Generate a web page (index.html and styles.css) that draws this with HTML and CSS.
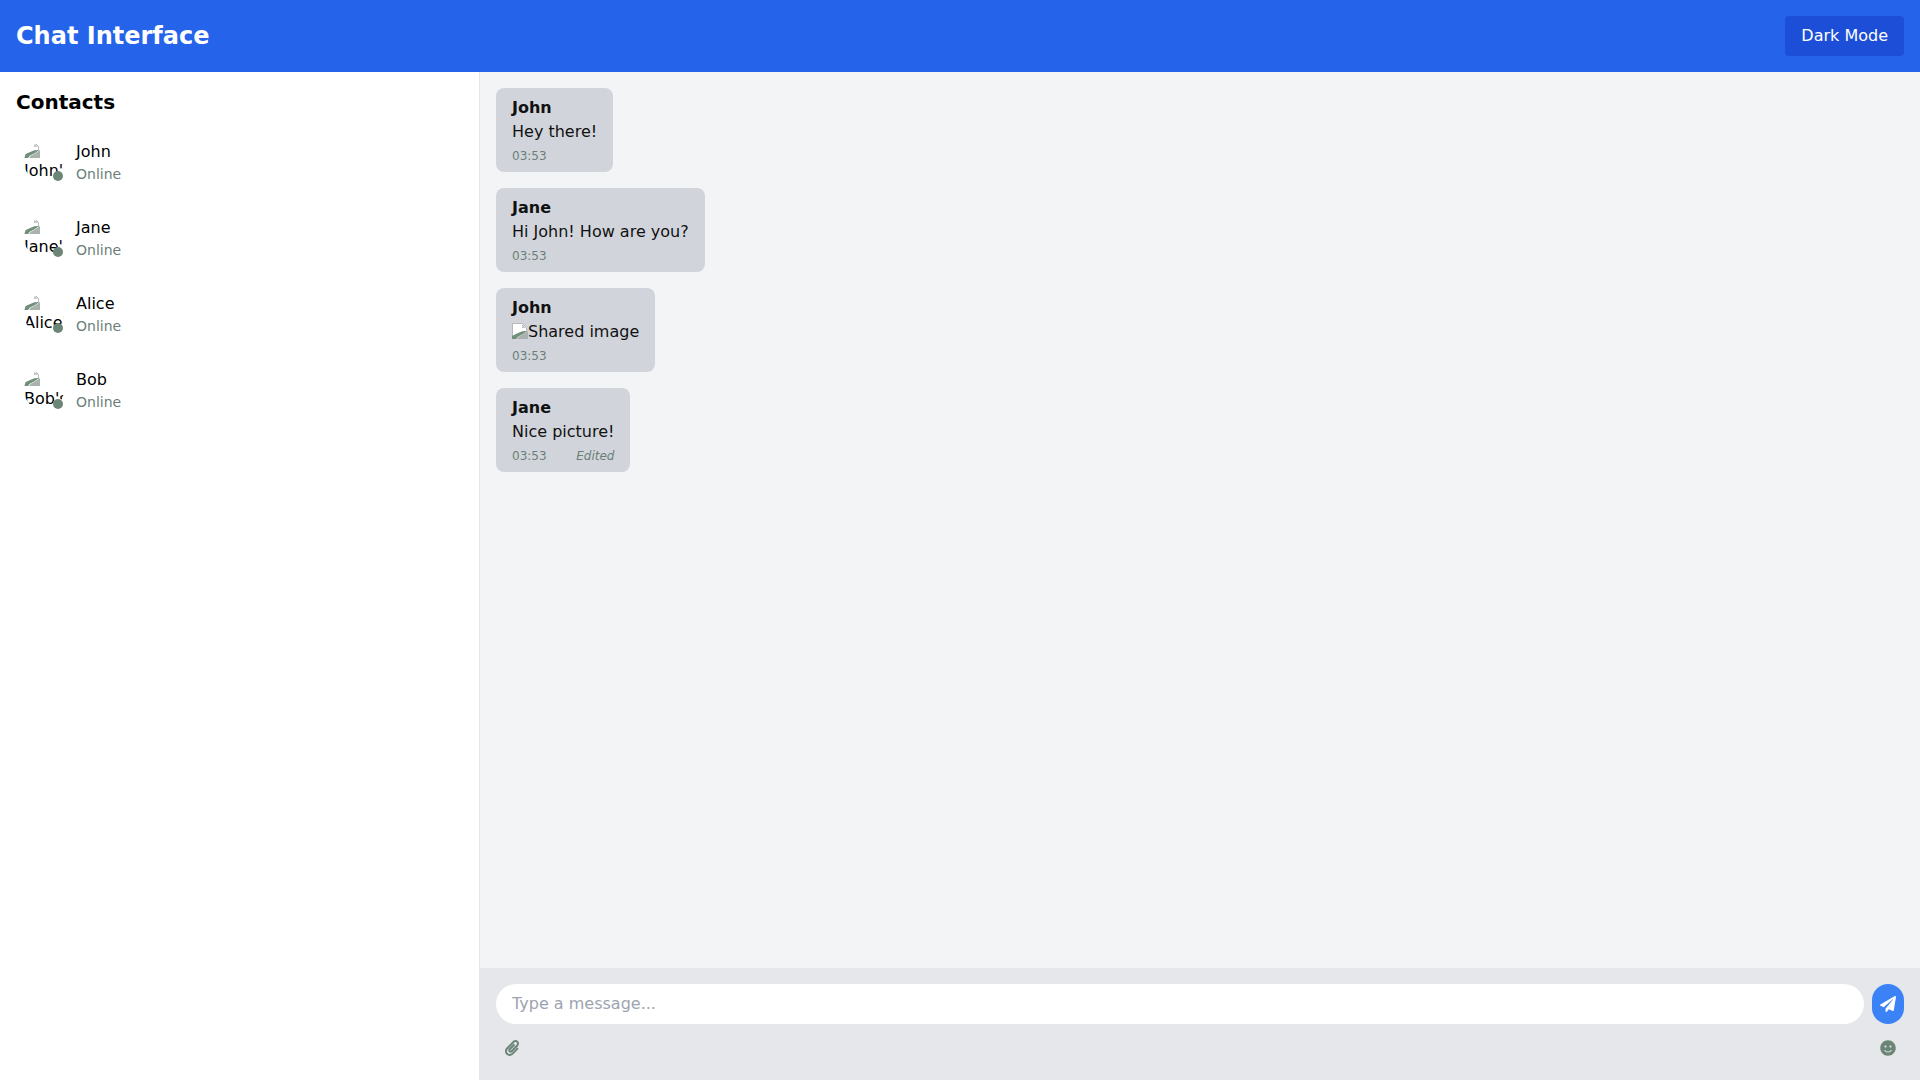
FILE: index.html
```html
<!DOCTYPE html>
<html lang="en">
<head>
  <meta charset="UTF-8">
  <title>Chat Interface</title>
  <link rel="stylesheet" href="styles.css">
</head>
<body>
  <svg class="defs" width="0" height="0">
    <symbol id="broken" viewBox="0 0 16 16">
      <path fill="#fff" stroke="#b4b9b7" d="M.5.500h10l4 4v4l-5 .5-4 2.500-5 1.500z"/>
      <path fill="#c3c7c5" d="M10 1l4 4h-4z"/>
      <path fill="#6f9079" d="M0 16v-3l5-2.500 5-2 5-.5-4 3-5 2.500-2 2.500z"/>
      <path fill="#aab2ae" d="M5 16l2-2.500 4-2 5-3.500v8z"/>
    </symbol>
  </svg>

  <header class="topbar">
    <h1>Chat Interface</h1>
    <button class="mode-btn">Dark Mode</button>
  </header>

  <div class="layout">
    <aside class="sidebar">
      <h2>Contacts</h2>
      <ul class="contacts">
        <li class="contact">
          <div class="avatar">
            <div class="avatar-clip">
              <svg class="broken"><use href="#broken"/></svg><span>John's avatar</span>
            </div>
            <span class="dot"></span>
          </div>
          <div>
            <div class="contact-name">John</div>
            <div class="contact-status">Online</div>
          </div>
        </li>
        <li class="contact">
          <div class="avatar">
            <div class="avatar-clip">
              <svg class="broken"><use href="#broken"/></svg><span>Jane's avatar</span>
            </div>
            <span class="dot"></span>
          </div>
          <div>
            <div class="contact-name">Jane</div>
            <div class="contact-status">Online</div>
          </div>
        </li>
        <li class="contact">
          <div class="avatar">
            <div class="avatar-clip">
              <svg class="broken"><use href="#broken"/></svg><span>Alice's avatar</span>
            </div>
            <span class="dot"></span>
          </div>
          <div>
            <div class="contact-name">Alice</div>
            <div class="contact-status">Online</div>
          </div>
        </li>
        <li class="contact">
          <div class="avatar">
            <div class="avatar-clip">
              <svg class="broken"><use href="#broken"/></svg><span>Bob's avatar</span>
            </div>
            <span class="dot"></span>
          </div>
          <div>
            <div class="contact-name">Bob</div>
            <div class="contact-status">Online</div>
          </div>
        </li>
      </ul>
    </aside>

    <main class="chat">
      <div class="messages">
        <div class="bubble">
          <div class="sender">John</div>
          <div>Hey there!</div>
          <div class="meta"><span>03:53</span></div>
        </div>
        <div class="bubble">
          <div class="sender">Jane</div>
          <div>Hi John! How are you?</div>
          <div class="meta"><span>03:53</span></div>
        </div>
        <div class="bubble">
          <div class="sender">John</div>
          <div class="shared"><svg class="broken"><use href="#broken"/></svg>Shared image</div>
          <div class="meta"><span>03:53</span></div>
        </div>
        <div class="bubble">
          <div class="sender">Jane</div>
          <div>Nice picture!</div>
          <div class="meta"><span>03:53</span><em>Edited</em></div>
        </div>
      </div>

      <div class="composer">
        <div class="composer-row">
          <input class="message-input" type="text" placeholder="Type a message...">
          <button class="send-btn" aria-label="Send">
            <svg viewBox="0 0 512 512" width="16" height="16"><path fill="#fff" d="M476 3.200L12.500 270.600c-18.100 10.400-15.800 35.600 2.200 43.200L121 358.400l287.300-253.200c5.500-4.900 13.300 2.600 8.600 8.300L176 407v80.500c0 23.600 28.500 32.900 42.500 15.800L282 426l124.600 52.200c14.200 6 30.400-2.900 33-18.200l72-432C515 7.800 493.300-6.800 476 3.200z"/></svg>
          </button>
        </div>
        <div class="tools">
          <svg viewBox="0 0 448 512" width="14" height="16"><path fill="#6b8577" d="M43.246 466.142c-58.430-60.289-57.341-157.511 1.386-217.581L254.392 34c44.316-45.332 116.351-45.336 160.671 0 43.890 44.894 43.943 117.329 0 162.276L232.214 383.128c-29.855 30.537-78.633 30.111-107.982-.998-28.275-29.970-27.368-77.473 1.452-106.953l143.743-146.835c6.182-6.314 16.312-6.422 22.626-.241l22.861 22.379c6.315 6.182 6.422 16.312.241 22.626L171.427 319.927c-4.932 5.045-5.236 13.428-.648 18.292 4.372 4.634 11.245 4.711 15.688.165l182.849-186.851c19.613-20.062 19.613-52.725-.011-72.798-19.189-19.627-49.957-19.637-69.154 0L90.390 293.295c-34.763 35.560-35.299 93.120-1.191 128.313 34.010 35.093 88.985 35.137 123.058.286l172.060-175.999c6.177-6.319 16.307-6.433 22.626-.256l22.877 22.364c6.319 6.177 6.434 16.307.256 22.626l-172.060 175.998c-59.576 60.938-155.943 60.216-214.770-.485z"/></svg>
          <svg viewBox="0 0 496 512" width="16" height="16"><path fill="#6b8577" d="M248 8C111 8 0 119 0 256s111 248 248 248 248-111 248-248S385 8 248 8zm80 168c17.700 0 32 14.300 32 32s-14.300 32-32 32-32-14.300-32-32 14.300-32 32-32zm-160 0c17.700 0 32 14.300 32 32s-14.300 32-32 32-32-14.300-32-32 14.300-32 32-32zm194.800 170.200C334.300 380.400 292.500 400 248 400s-86.300-19.600-114.800-53.800c-13.600-16.300 11-36.700 24.600-20.500 22.400 26.900 55.200 42.200 90.200 42.200s67.800-15.400 90.200-42.200c13.400-16.200 38.100 4.200 24.600 20.500z"/></svg>
        </div>
      </div>
    </main>
  </div>
</body>
</html>
```

FILE: styles.css
```css
* {
  box-sizing: border-box;
}
body {
  margin: 0;
  height: 100vh;
  display: flex;
  flex-direction: column;
  overflow: hidden;
  font-family: "DejaVu Sans", sans-serif;
  font-size: 16px;
  line-height: 24px;
  color: #000;
  background: #fff;
}
.defs {
  position: absolute;
}
.topbar {
  height: 72px;
  flex-shrink: 0;
  display: flex;
  justify-content: space-between;
  align-items: center;
  padding: 0 16px;
  background: #2563eb;
  color: #fff;
}
.topbar h1 {
  margin: 0;
  font-size: 24px;
  line-height: 32px;
  font-weight: 700;
}
.mode-btn {
  height: 40px;
  padding: 0 16px;
  border: none;
  border-radius: 4px;
  background: #1d4ed8;
  color: #fff;
  font: inherit;
}
.layout {
  flex: 1;
  display: flex;
  min-height: 0;
}
.sidebar {
  width: 25%;
  padding: 16px;
  border-right: 1px solid #e5e7eb;
  background: #fff;
}
.sidebar h2 {
  margin: 0 0 16px;
  font-size: 20px;
  line-height: 28px;
  font-weight: 700;
}
.contacts {
  list-style: none;
  margin: 0;
  padding: 0;
}
.contact {
  display: flex;
  align-items: center;
  gap: 12px;
  padding: 8px;
  height: 60px;
  margin-bottom: 16px;
}
.avatar {
  position: relative;
  width: 40px;
  height: 40px;
  flex-shrink: 0;
}
.avatar-clip {
  width: 40px;
  height: 40px;
  border-radius: 50%;
  overflow: hidden;
  line-height: normal;
}
.avatar-clip .broken {
  display: block;
  margin-bottom: 3px;
}
.broken {
  width: 16px;
  height: 16px;
  vertical-align: -2px;
}
.dot {
  position: absolute;
  right: 1px;
  bottom: 1px;
  width: 10px;
  height: 10px;
  border-radius: 50%;
  background: #6b8577;
}
.contact-name {
  font-size: 16px;
  line-height: 24px;
}
.contact-status {
  font-size: 14px;
  line-height: 20px;
  color: #6b7f78;
}
.chat {
  flex: 1;
  display: flex;
  flex-direction: column;
  min-width: 0;
  background: #f3f4f6;
}
.messages {
  flex: 1;
  display: flex;
  flex-direction: column;
  align-items: flex-start;
  gap: 16px;
  padding: 16px;
}
.bubble {
  padding: 8px 16px;
  border-radius: 8px;
  background: #d1d5db;
  color: #111;
}
.sender {
  font-weight: 700;
}
.shared {
  white-space: nowrap;
}
.meta {
  display: flex;
  justify-content: space-between;
  gap: 29px;
  margin-top: 4px;
  font-size: 12px;
  line-height: 16px;
  color: #6b7f78;
}
.composer {
  flex-shrink: 0;
  height: 112px;
  padding: 16px;
  background: #e5e7eb;
}
.composer-row {
  display: flex;
  gap: 8px;
}
.message-input {
  flex: 1;
  height: 40px;
  padding: 0 16px 2px;
  border: none;
  border-radius: 20px;
  background: #fff;
  font: inherit;
  outline: none;
}
.message-input::placeholder {
  color: #9ca3af;
}
.send-btn {
  width: 32px;
  height: 40px;
  padding: 0;
  border: none;
  border-radius: 16px;
  background: #3b82f6;
  display: flex;
  align-items: center;
  justify-content: center;
}
.tools {
  display: flex;
  justify-content: space-between;
  padding: 0 8px 0 9px;
  margin-top: 16px;
}
```
